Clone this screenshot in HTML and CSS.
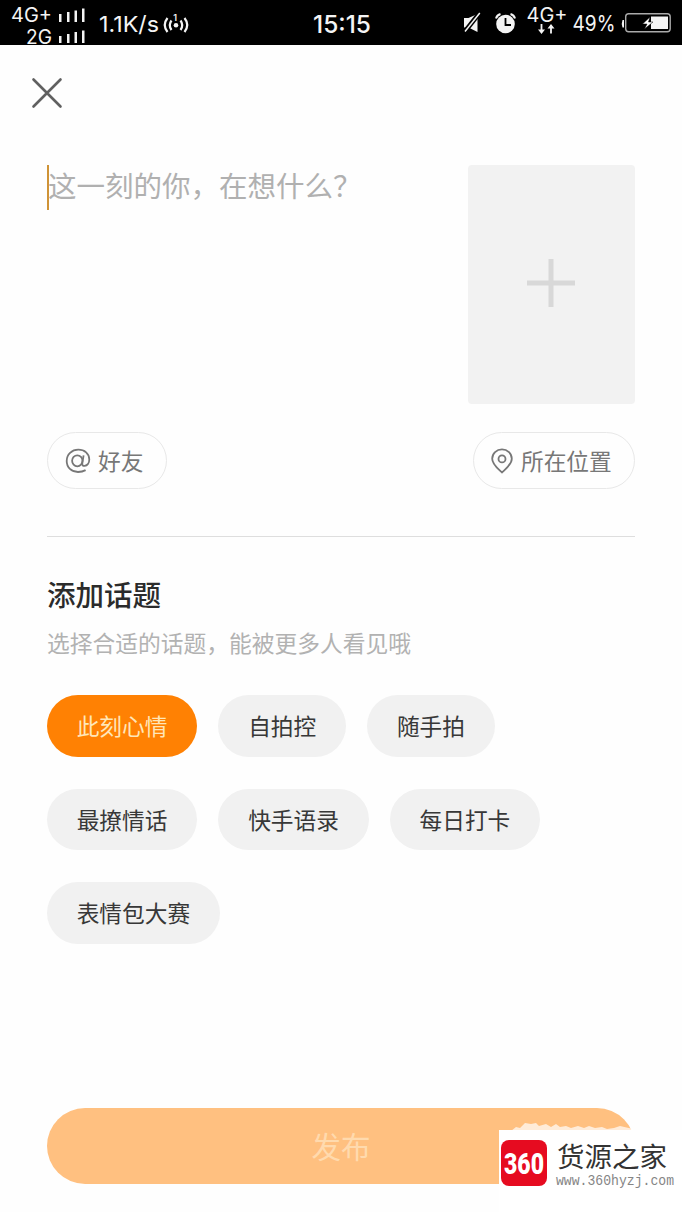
FILE: index.html
```html
<!DOCTYPE html>
<html lang="zh-CN">
<head>
<meta charset="utf-8">
<title>添加话题</title>
<link rel="stylesheet" href="styles.css">
</head>
<body>
<div class="screen">
  <header class="status">
    <svg class="status-left" width="200" height="45" viewBox="0 0 200 45">
      <g class="status-text">
        <text x="11" y="22" font-size="19.500" textLength="41" lengthAdjust="spacingAndGlyphs">4G+</text>
        <text x="26" y="43.500" font-size="19.500" textLength="26" lengthAdjust="spacingAndGlyphs">2G</text>
        <text x="99" y="31.500" font-size="22" textLength="60" lengthAdjust="spacingAndGlyphs">1.1K/s</text>
        <text x="173.300" y="21" font-size="9" font-weight="600">1</text>
      </g>
      <path class="fill" d="M59 14h2.500v8H59zM67 12h2.500v10H67zM74.500 10.500h2.500v11.500h-2.500zM82 8.500h2.500v13.500H82zM59 36h2.500v7H59zM67 34h2.500v9H67zM74.500 32h2.500v11h-2.500zM82 30.500h2.500v12.500H82z"/>
      <circle class="fill" cx="176" cy="25.300" r="2.300"/>
      <path class="line" stroke-width="2.200" d="M171.500 20.500q-3.500 4.800 0 9.500M167.500 18q-5.500 7 0 14M180.500 20.500q3.500 4.800 0 9.500M184.500 18q5.500 7 0 14"/>
    </svg>
    <svg class="status-time" width="70" height="45" viewBox="0 0 70 45">
      <g class="status-text"><text x="6" y="33" font-size="24.500" textLength="58" lengthAdjust="spacingAndGlyphs" font-weight="500">15:15</text></g>
    </svg>
    <svg class="status-right" width="232" height="45" viewBox="0 0 232 45">
      <path class="fill" d="M14 18h4.500l9-4v18l-9-4.500H14z"/>
      <path d="M14.500 32L29.500 13" stroke="#000" stroke-width="4.600"/>
      <path class="line" stroke-width="1.500" d="M15 31.500L29.800 13"/>
      <circle class="fill" cx="55.500" cy="24" r="9.300"/>
      <path d="M55.500 18v7h5.500" fill="none" stroke="#000" stroke-width="1.800"/>
      <path class="line" stroke-width="2" d="M46 18.500q1-3.500 4.500-4.500M65 18.500q-1-3.500-4.500-4.500"/>
      <g class="status-text">
        <text x="76.500" y="21.500" font-size="19.500" textLength="41" lengthAdjust="spacingAndGlyphs">4G+</text>
        <text x="122.500" y="31" font-size="21.500" textLength="43" lengthAdjust="spacingAndGlyphs">49%</text>
      </g>
      <path class="line" stroke-width="1.800" d="M91.500 24v8M101 33.500v-8"/>
      <path class="fill" d="M88 29.500h7l-3.500 4.500zM97.500 28.500h7l-3.500-4.500zM174 20h-1.500q-1.500 4 0 7.500h1.500z"/>
      <rect x="175.700" y="13.700" width="44.500" height="18" rx="3" fill="none" stroke="#aaa" stroke-width="1.400"/>
      <path class="fill" d="M201 16.500h17v12.500h-17z"/>
      <path d="M200 17l-7.500 7h4.500l-2.500 5 8.500-7h-4.500z" fill="#fff" stroke="#000" stroke-width=".5"/>
    </svg>
  </header>

  <main class="page">
    <svg class="close" width="30" height="30" viewBox="0 0 30 30"><path d="M1.500 1.500l27 27M28.500 1.500l-27 27"/></svg>

    <section class="compose">
      <div class="input"><span class="caret"></span><span>这一刻的你，在想什么？</span></div>
      <div class="upload"><svg width="48" height="48" viewBox="0 0 48 48"><path d="M24 0v48M0 24h48"/></svg></div>
    </section>

    <div class="actions">
      <div class="action">
        <svg width="26" height="26" viewBox="0 0 26 26"><ellipse cx="12.300" cy="12.800" rx="5.200" ry="5.500"/><path d="M18.600 7.300l-1.300 7.900q-.3 3 2.300 2.700c2.700-.4 4.700-3 4.700-6.300C24.300 5.500 19.500 1.700 13.300 1.700 6.800 1.700 1.700 6.500 1.700 13S6.500 24 13 24q4.300 0 7.600-1.900"/></svg>
        <span>好友</span>
      </div>
      <div class="action place">
        <svg width="22" height="26" viewBox="0 0 22 26"><path d="M11 24.400C7 20.500 1.200 16.500 1.200 10.700a9.800 9.300 0 0 1 19.600 0C20.800 16.500 15 20.500 11 24.400z"/><circle cx="11" cy="10.900" r="3.500"/></svg>
        <span>所在位置</span>
      </div>
    </div>

    <section class="topics">
      <h1 class="title">添加话题</h1>
      <p class="hint">选择合适的话题，能被更多人看见哦</p>
      <div class="tags">
        <div class="row"><span class="tag active">此刻心情</span><span class="tag">自拍控</span><span class="tag">随手拍</span></div>
        <div class="row"><span class="tag">最撩情话</span><span class="tag">快手语录</span><span class="tag">每日打卡</span></div>
        <div class="row"><span class="tag">表情包大赛</span></div>
      </div>
    </section>

    <div class="publish">发布</div>
  </main>

  <aside class="brand">
    <svg class="brand-edge" width="183" height="10" viewBox="0 0 183 10"><path d="M12 10l5-4 4 1 5-5 6 1 5-1 3 3 7-2 5 3 5-3 4 3 6-1 5 2 7-2 6 2 5-2 6 2 7-1 5 2 7-1 6-2 13 3v2z" fill="#fff" opacity=".7"/></svg>
    <div class="badge"><svg width="46" height="46" viewBox="0 0 46 46"><text x="3" y="33.500" textLength="40" lengthAdjust="spacingAndGlyphs">360</text></svg></div>
    <div class="brand-copy">
      <div class="brand-name">货源之家</div>
      <svg width="120" height="22" viewBox="0 0 120 22"><text class="brand-url" x="0" y="13.500" textLength="118" lengthAdjust="spacingAndGlyphs">www.360hyzj.com</text></svg>
    </div>
  </aside>
</div>
</body>
</html>
```
FILE: styles.css
```css
* { box-sizing: border-box; }
body { margin: 0; background: #fefefe; font-family: "Noto Sans CJK SC", sans-serif; }
svg { display: block; flex: none; overflow: visible; }
.screen { position: relative; width: 682px; height: 1212px; overflow: hidden; display: flex; flex-direction: column; }

.status { height: 45px; flex: none; background: #000; display: flex; }
.status-time { margin-left: 107px; margin-right: 73px; }
.status-text { fill: #f4f4f4; font-family: Inter, sans-serif; }
.fill { fill: #f4f4f4; }
.line { fill: none; stroke: #f4f4f4; }

.page { flex: 1; padding: 33px 47px 28px; display: flex; flex-direction: column; }
.close { margin-left: -15px; }
.close path { fill: none; stroke: #606060; stroke-width: 2.6; stroke-linecap: round; }

.compose { margin-top: 57px; display: flex; justify-content: space-between; }
.input { display: flex; height: 45px; color: #b0b0b0; font-size: 28.5px; font-weight: 400; line-height: 40px; white-space: nowrap; }
.caret { width: 2px; height: 45px; margin-right: -1px; background: #cf9336; }
.upload { width: 167px; height: 239px; border-radius: 4px; background: #f2f2f2; display: grid; place-items: center; padding: 0 2px 3px 0; }
.upload path { stroke: #d8d8d8; stroke-width: 5; }

.actions { margin-top: 28px; display: flex; justify-content: space-between; }
.action { height: 57px; width: 120px; border: 1.5px solid #e8e8e8; border-radius: 29px; padding-left: 17px; display: flex; align-items: center; gap: 7px; color: #777; font-size: 22.7px; line-height: 54px; white-space: nowrap; }
.action.place { width: 162px; gap: 8px; }
.action path, .action circle, .action ellipse { fill: none; stroke: #777; stroke-width: 1.8; }

.topics { margin-top: 47px; border-top: 1px solid #dedede; padding-top: 36px; }
.title { margin: 0; font-size: 28.5px; font-weight: 500; line-height: 42px; color: #2b2b2b; }
.hint { margin: 11px 0 0; font-size: 22.75px; font-weight: 400; line-height: 34px; color: #b2b2b2; white-space: nowrap; }
.tags { margin-top: 35px; display: flex; flex-direction: column; gap: 32px; }
.row { display: flex; gap: 21px; }
.tag { height: 61.700px; padding: 0 30px 0 29.700px; border-radius: 31px; background: #f1f1f1; color: #383838; font-size: 22.7px; line-height: 62.500px; white-space: nowrap; }
.active { background: #ff8103; color: #ffe6b8; }

.publish { height: 76px; margin-top: auto; border-radius: 38px; background: #ffc080; color: #ffdaae; font-size: 29.500px; line-height: 75px; text-align: center; }

.brand { position: absolute; left: 499px; top: 1130px; width: 183px; height: 82px; background: #fff; padding: 10px 0 0 2px; display: flex; gap: 9px; }
.brand-edge { position: absolute; left: 0; top: -9px; }
.badge { width: 46px; height: 46px; border-radius: 8px; background: #e60b20; flex: none; }
.badge text { fill: #fff; font: 900 30px Roboto, sans-serif; }
.brand-copy { display: flex; flex-direction: column; }
.brand-name { font-size: 27.5px; line-height: 31px; color: #333; white-space: nowrap; padding-left: 1px; }
.brand-url { fill: #858585; font: 15px "Liberation Mono", monospace; }
```
